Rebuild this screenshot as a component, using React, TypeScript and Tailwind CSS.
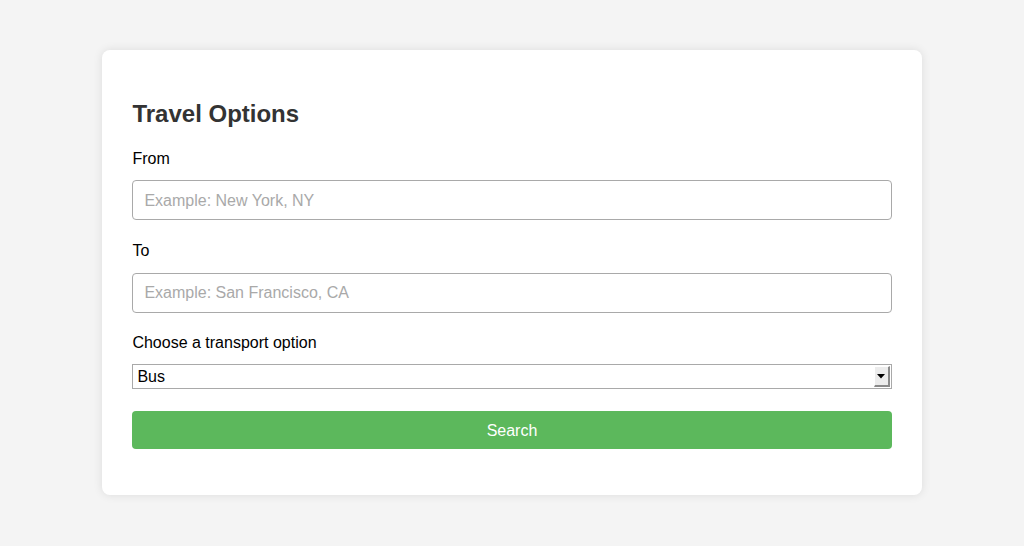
import React from "react";

export default function App() {
  return (
    <div className="min-h-[546px] w-full bg-[#f4f4f4] pt-[50px]" style={{ fontFamily: '"Liberation Sans", Arial, sans-serif' }}>
      <div className="mx-auto w-[80%] rounded-[8px] bg-white px-[30px] pt-[30px] pb-[46px] shadow-[0_0_10px_rgba(0,0,0,0.1)]">
        <h2 className="mt-[20px] mb-[20px] text-[24px] font-bold leading-[28px] text-[#333]">Travel Options</h2>

        <label className="mb-[12px] block pt-[2px] text-[16px] leading-[18.4px] text-black">From</label>
        <input
          type="text"
          placeholder="Example: New York, NY"
          className="mb-[20px] block h-[40px] w-full rounded-[4px] border border-[#a9a9a9] bg-white px-[11px] pt-[1px] text-[16px] text-black outline-none placeholder:text-[#a9a9a9]"
        />

        <label className="mb-[12px] block pt-[2px] text-[16px] leading-[18.4px] text-black">To</label>
        <input
          type="text"
          placeholder="Example: San Francisco, CA"
          className="mb-[20px] block h-[40px] w-full rounded-[4px] border border-[#a9a9a9] bg-white px-[11px] pt-[1px] text-[16px] text-black outline-none placeholder:text-[#a9a9a9]"
        />

        <label className="mb-[12px] block pt-[1px] text-[16px] leading-[18.4px] text-black">Choose a transport option</label>
        <div className="mb-[22px] flex h-[25px] w-full items-center border border-[#a9a9a9] bg-white pl-[4px] pr-[1px]">
          <span className="flex-1 text-[16px] leading-[18px] text-black">Bus</span>
          <div className="flex h-[21px] w-[16px] items-center justify-center border-t border-l border-t-white border-l-white border-b-2 border-r-2 border-b-[#8a8a8a] border-r-[#8a8a8a] bg-[#ececec]">
            <svg width="8" height="5" viewBox="0 0 8 5">
              <polygon points="0,0 8,0 4,4.5" fill="#000" />
            </svg>
          </div>
        </div>

        <button className="block h-[38px] w-full rounded-[4px] bg-[#5cb85c] pt-[1px] text-[16px] text-white">Search</button>
      </div>
    </div>
  );
}
